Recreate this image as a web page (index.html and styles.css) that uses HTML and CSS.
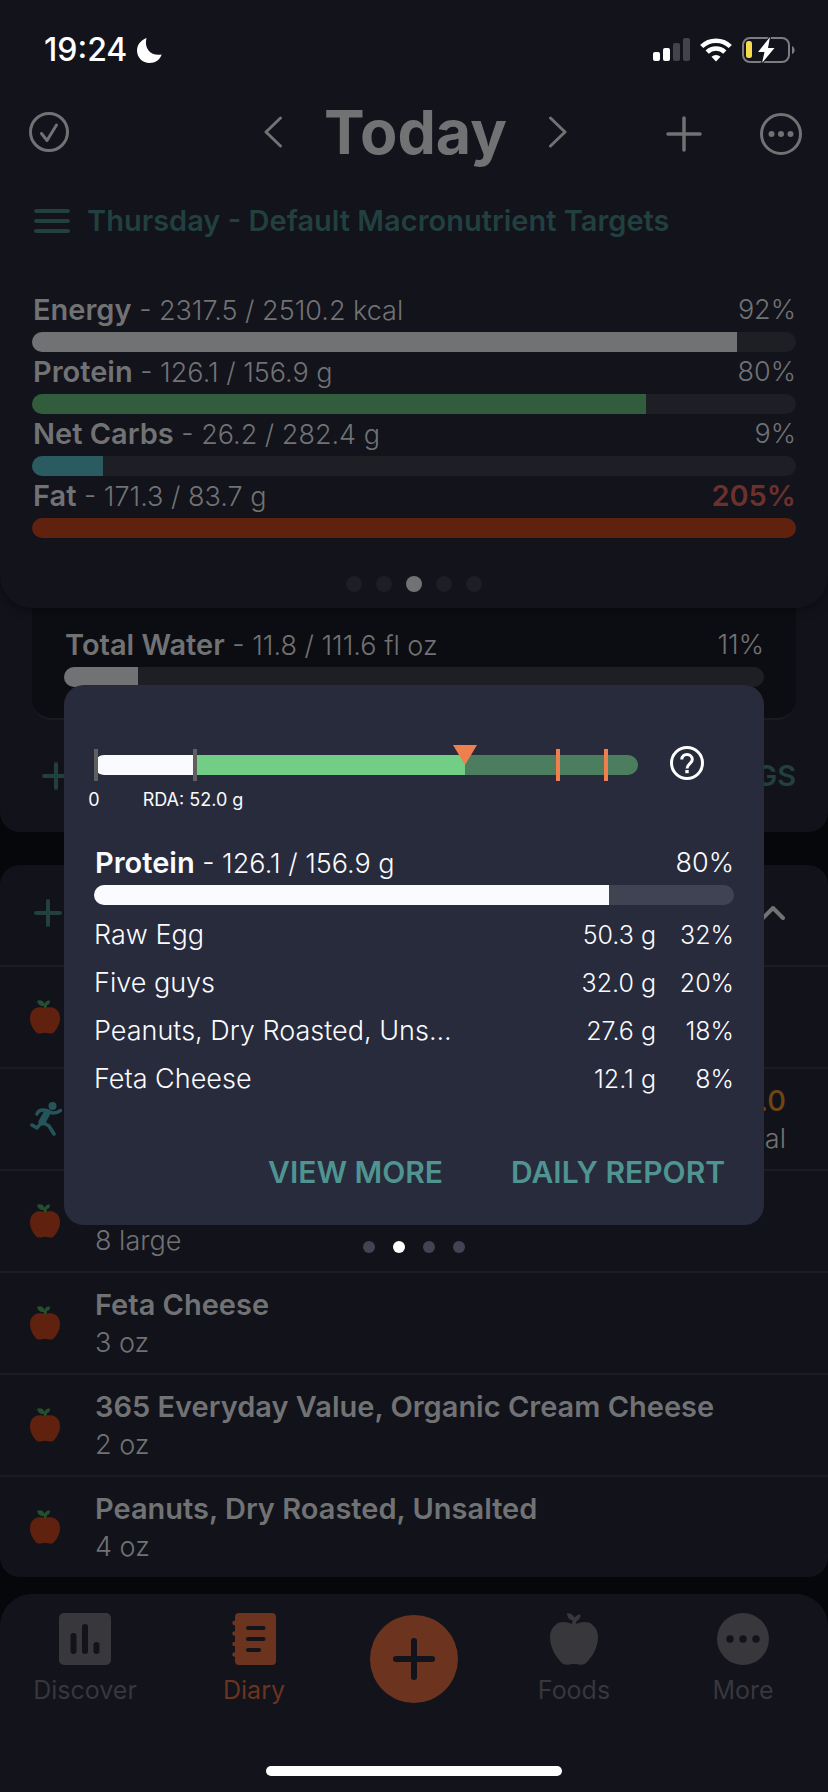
FILE: index.html
```html
<!DOCTYPE html>
<html lang="en">
<head>
<meta charset="utf-8">
<meta name="viewport" content="width=device-width, initial-scale=1">
<title>Diary</title>
<link rel="stylesheet" href="styles.css">
</head>
<body>
<svg class="defs" aria-hidden="true">
  <symbol id="apple" viewBox="0 0 30 34">
    <path class="apple-leaf" d="M7 1c3-2 7 0 7.500 3 .5-2 2.500-4 5.500-3.500 0 3-1 4-3 4.500l-.5 4h-3l.3-3C10.500 6.500 8 5 7 1z"/>
    <path class="apple-body" d="M15 8.500c3-1.500 7-2 10 0 3.500 2 5 5.500 5 10 0 6-4 12-7 14.500-2.500 1.500-5-.3-8-.3S9.500 34.500 7 33C4 30.500 0 24.500 0 18.500c0-4.500 1.500-8 5-10 3-2 7-1.500 10 0z"/>
  </symbol>
</svg>
<div class="screen">
  <header class="top">
    <div class="status">
      <div class="status-left">
        <span class="clock">19:24</span>
        <svg width="25" height="25" viewBox="0 0 25 25"><path fill="#fff" d="M9.500 0C5 1.500 0 6 0 12.500 0 19.500 5.500 25 12.500 25c6 0 10.500-3.500 12.200-8.500C15 18.500 6.500 11.500 9.500 0z"/></svg>
      </div>
      <div class="status-right">
        <svg width="37" height="24" viewBox="0 0 37 24"><g fill="#fff"><rect y="14" width="7" height="9" rx="2"/><rect x="10" y="10" width="7" height="13" rx="2"/></g><g fill="#434449"><rect x="20" y="5" width="7" height="18" rx="2"/><rect x="30" width="7" height="23" rx="2"/></g></svg>
        <svg width="32" height="24" viewBox="0 0 32 24"><g fill="none" stroke="#fff" stroke-width="4.500"><path d="M1.700 8.500a20.500 20.500 0 0 1 28.600 0"/><path d="M7.200 14.200a12.600 12.600 0 0 1 17.600 0"/></g><path fill="#fff" d="M11.500 18.800a6.400 6.400 0 0 1 9 0L16 23.500z"/></svg>
        <svg width="53" height="26" viewBox="0 0 53 26"><rect x="1" y="1" width="46" height="24" rx="7" fill="none" stroke="#7c7d81" stroke-width="2"/><path d="M50 9c3.500 1.500 3.500 7 0 8z" fill="#7c7d81"/><rect x="4" y="4" width="6" height="17" rx="2.500" fill="#f8d94b"/><path d="M28 0L16 15h6.500L20 26l12.500-15H26z" fill="#fff" stroke="#12131b" stroke-width="2" paint-order="stroke"/></svg>
      </div>
    </div>
    <div class="titlebar">
      <button class="icon-btn" aria-label="Mark day complete"><svg width="40" height="40" viewBox="0 0 40 40"><circle cx="20" cy="20" r="18.500"/><path d="M12.500 21.500l5.500 7L27.500 13" /></svg></button>
      <div class="day">
        <button class="icon-btn" aria-label="Previous day"><svg width="18" height="32" viewBox="0 0 18 32"><path d="M16.500 2L2 16l14.500 14"/></svg></button>
        <h1>Today</h1>
        <button class="icon-btn" aria-label="Next day"><svg width="18" height="32" viewBox="0 0 18 32"><path d="M1.500 2L16 16 1.500 30"/></svg></button>
      </div>
      <div class="actions">
        <button class="icon-btn" aria-label="Add"><svg width="36" height="36" viewBox="0 0 36 36"><path d="M18 2v32M2 18h32" stroke-width="3.500"/></svg></button>
        <button class="icon-btn" aria-label="Options"><svg width="42" height="42" viewBox="0 0 42 42"><circle cx="21" cy="21" r="19.500"/><g fill="#717274" stroke="none"><circle cx="11.500" cy="21" r="3"/><circle cx="21" cy="21" r="3"/><circle cx="30.500" cy="21" r="3"/></g></svg></button>
      </div>
    </div>
    <a class="targets" href="#targets">
      <svg width="36" height="26" viewBox="0 0 36 26"><path d="M2 3h32M2 13h32M2 23h32"/></svg>
      <span>Thursday - Default Macronutrient Targets</span>
    </a>
    <div class="metrics">
      <div class="metric"><div class="metric-text"><span><b>Energy</b> - 2317.5 / 2510.2 kcal</span><span>92%</span></div><div class="track"><div class="fill" style="width:92.3%"></div></div></div>
      <div class="metric"><div class="metric-text"><span><b>Protein</b> - 126.1 / 156.9 g</span><span>80%</span></div><div class="track"><div class="fill protein" style="width:80.4%"></div></div></div>
      <div class="metric"><div class="metric-text"><span><b>Net Carbs</b> - 26.2 / 282.4 g</span><span>9%</span></div><div class="track"><div class="fill carbs" style="width:9.3%"></div></div></div>
      <div class="metric"><div class="metric-text"><span><b>Fat</b> - 171.3 / 83.7 g</span><b class="over">205%</b></div><div class="track"><div class="fill fat" style="width:100%"></div></div></div>
    </div>
    <div class="dots"><i></i><i></i><i class="on"></i><i></i><i></i></div>
  </header>

  <main>
    <section class="panel water">
      <div class="water-card">
        <div class="metric"><div class="metric-text"><span><b>Total Water</b> - 11.8 / 111.6 fl oz</span><span>11%</span></div><div class="track"><div class="fill" style="width:10.6%"></div></div></div>
      </div>
      <div class="water-actions">
        <button class="add" aria-label="Add water"><svg width="28" height="28" viewBox="0 0 28 28"><path d="M14 2v24M2 14h24"/></svg></button>
        <button class="settings">SETTINGS</button>
      </div>
    </section>

    <section class="panel diary">
      <div class="diary-head">
        <button class="add" aria-label="Add food"><svg width="28" height="28" viewBox="0 0 28 28"><path d="M14 2v24M2 14h24"/></svg></button>
        <button class="icon-btn" aria-label="Collapse"><svg width="24" height="14" viewBox="0 0 24 14"><path d="M2 12L12 2l10 10" stroke-width="4"/></svg></button>
      </div>
      <ul>
        <li><svg class="food"><use href="#apple"/></svg></li>
        <li>
          <svg class="runner" viewBox="0 0 32 34"><circle cx="22.500" cy="4" r="4"/><g fill="none" stroke-width="3.500" stroke-linecap="round" stroke-linejoin="round"><path d="M7 12c1.500-4 5-4.500 9.500-3.500 5 1.500 6 5 14 0"/><path d="M17 11l-6 10 -4 5-5-3" /><path d="M12 20l7 4 5 8"/><path d="M17 11l-5 9" stroke-width="7"/></g></svg>
          <div class="amount"><b>0.0</b><span>kcal</span></div>
        </li>
        <li><svg class="food"><use href="#apple"/></svg><div class="item"><b>Raw Egg</b><span>8 large</span></div></li>
        <li><svg class="food"><use href="#apple"/></svg><div class="item"><b>Feta Cheese</b><span>3 oz</span></div></li>
        <li><svg class="food"><use href="#apple"/></svg><div class="item"><b>365 Everyday Value, Organic Cream Cheese</b><span>2 oz</span></div></li>
        <li><svg class="food"><use href="#apple"/></svg><div class="item"><b>Peanuts, Dry Roasted, Unsalted</b><span>4 oz</span></div></li>
      </ul>
    </section>
  </main>

  <nav class="tabs">
    <div class="tab-grid">
      <a href="#discover"><svg width="52" height="52" viewBox="0 0 52 52"><rect width="52" height="52" rx="5" fill="currentColor"/><path class="cut" d="M14.500 23v15M26 14v24M37.500 32v6" stroke-width="6"/></svg><span>Discover</span></a>
      <a href="#diary" class="active" aria-current="page"><svg width="44" height="52" viewBox="0 0 44 52"><rect x="3" width="41" height="52" rx="4" fill="currentColor"/><g fill="currentColor"><circle cx="2.500" cy="10" r="2.300"/><circle cx="2.500" cy="20.500" r="2.300"/><circle cx="2.500" cy="31" r="2.300"/><circle cx="2.500" cy="41.500" r="2.300"/></g><path class="cut" d="M16 15h15.500M16 26h15.500M16 37h11" stroke-width="4"/></svg><span>Diary</span></a>
      <button class="fab" aria-label="Add to diary"><svg width="44" height="44" viewBox="0 0 44 44"><path class="cut" d="M22 4v36M4 22h36" stroke-width="6"/></svg></button>
      <a href="#foods"><svg width="48" height="52" viewBox="0 0 48 52"><path fill="currentColor" d="M17 0c4 .5 6.500 2 7.500 5 1.500-2.500 3.500-4 6-3.500.3 3-1.500 5.500-4 6.500l-.3 3c5-2.500 12-3 16 .5C46 14.500 48 18.500 48 24c0 9-4.500 18-10 24-4.500 6-8 3-14 3s-9.500 3-14-3C4.500 42 0 33 0 24c0-5.500 2-9.500 6-12.500 4-3.500 11-3 16-.5l.5-3.500C19 6.500 17 4 17 0z"/></svg><span>Foods</span></a>
      <a href="#more"><svg width="52" height="52" viewBox="0 0 52 52"><circle cx="26" cy="26" r="26" fill="currentColor"/><g fill="#12131b"><circle cx="13" cy="26" r="3.700"/><circle cx="26" cy="26" r="3.700"/><circle cx="39" cy="26" r="3.700"/></g></svg><span>More</span></a>
    </div>
    <div class="home"></div>
  </nav>

  <div class="overlay">
    <section class="modal" role="dialog" aria-label="Protein">
      <div class="gauge-row">
        <div class="gauge">
          <div class="gauge-track"><div class="low"></div><div class="mid"></div></div>
          <i class="tick" style="left:0"></i><i class="tick" style="left:18.200%"></i>
          <i class="tick target" style="left:85%"></i><i class="tick target" style="left:93.750%"></i>
          <svg class="pointer" viewBox="0 0 24 20"><path d="M0 0h24L12 20z" fill="#ef7f4e"/></svg>
          <span class="mark" style="left:0">0</span><span class="mark" style="left:18.200%">RDA: 52.0 g</span>
        </div>
        <button class="help" aria-label="Help"><svg width="36" height="36" viewBox="0 0 36 36"><g fill="none" stroke="#fff" stroke-width="3"><circle cx="18" cy="18" r="15.500"/><path d="M12.800 14.500c0-7 10.500-6.500 10.500 0 0 4-5.300 4.200-5.300 9" /></g><rect x="16.300" y="25" width="3.400" height="3.200" fill="#fff"/></svg></button>
      </div>
      <div class="metric"><div class="metric-text"><span><b>Protein</b> - 126.1 / 156.9 g</span><span>80%</span></div><div class="track"><div class="fill" style="width:80.4%"></div></div></div>
      <table>
        <tr><th scope="row">Raw Egg</th><td>50.3 g</td><td>32%</td></tr>
        <tr><th scope="row">Five guys</th><td>32.0 g</td><td>20%</td></tr>
        <tr><th scope="row">Peanuts, Dry Roasted, Uns...</th><td>27.6 g</td><td>18%</td></tr>
        <tr><th scope="row">Feta Cheese</th><td>12.1 g</td><td>8%</td></tr>
      </table>
      <div class="modal-actions"><button>VIEW MORE</button><button>DAILY REPORT</button></div>
    </section>
    <div class="dots small"><i></i><i class="on"></i><i></i><i></i></div>
  </div>
</div>
</body>
</html>
```
FILE: styles.css
```css
* { box-sizing: border-box; }
body { margin: 0; background: #06070b; color: #717274; font: 300 27px/42px Inter, "Liberation Sans", sans-serif; }
button { border: 0; padding: 0; background: none; color: inherit; font: inherit; }
a { color: inherit; text-decoration: none; }
ul { margin: 0; padding: 0; list-style: none; }
svg { display: block; flex: none; }
b { font-weight: 600; font-size: 29px; }
.defs { position: absolute; width: 0; height: 0; }
.screen { position: relative; }

.top { position: relative; z-index: 1; padding-bottom: 16px; background: #12131b; border-radius: 0 0 32px 32px; box-shadow: 0 2px 12px rgba(0, 0, 0, .4); }
.status { display: flex; justify-content: space-between; align-items: center; height: 100px; padding: 0 33px 0 44px; color: #fff; }
.status-left, .status-right { display: flex; align-items: center; gap: 10px; }
.clock { font-size: 32px; font-weight: 500; }
.titlebar { display: grid; grid-template-columns: 1fr auto 1fr; align-items: center; height: 64px; padding: 0 26px 0 29px; }
.icon-btn svg { fill: none; stroke: #717274; stroke-width: 3; stroke-linecap: round; stroke-linejoin: round; }
.day { display: flex; align-items: center; gap: 42px; }
.day h1 { margin: 0; font-size: 61px; line-height: 64px; font-weight: 700; }
.actions { display: flex; justify-content: flex-end; align-items: center; gap: 58px; padding-top: 4px; }
.targets { display: flex; align-items: center; gap: 17px; height: 42px; margin-top: 36px; padding: 0 34px; color: #21403f; font-size: 29px; font-weight: 600; }
.targets svg { fill: none; stroke: currentColor; stroke-width: 4; stroke-linecap: round; }
.metrics { margin-top: 48px; padding: 0 32px; }
.metric-text { display: flex; justify-content: space-between; height: 42px; padding-left: 1px; line-height: 40px; }
.track { height: 20px; overflow: hidden; border-radius: 10px; background: #1e1f24; }
.fill { height: 100%; background: #717274; }
.fill.protein { background: #325d3c; }
.fill.carbs { background: #2a5b61; }
.fill.fat { background: #61210f; }
.over { color: #6c302d; }
.dots { display: flex; justify-content: center; gap: 14px; margin-top: 38px; }
.dots i { width: 16px; height: 16px; border-radius: 50%; background: #1e1f24; }
.dots .on { background: #717274; }

.panel { background: #12131a; border-radius: 20px; }
.water { margin-top: -48px; padding: 0 32px; }
.water-card { padding: 65px 32px 31px; background: #0c0d12; border-bottom: 2px solid #1a1b1f; border-radius: 20px; }
.water-actions { display: flex; justify-content: space-between; align-items: center; height: 112px; padding: 0 0 0 10px; color: #21403f; }
.settings { font-size: 29px; font-weight: 600; }
.add svg { fill: none; stroke: #21403f; stroke-width: 4; stroke-linecap: round; }
.diary { margin-top: 33px; }
.diary-head { display: flex; justify-content: space-between; align-items: center; height: 102px; padding: 0 43px 4px 34px; border-bottom: 2px solid #1b1c21; }
.diary li { display: flex; align-items: center; gap: 35px; height: 102px; padding: 0 42px 0 30px; border-bottom: 2px solid #1b1c21; line-height: 38px; }
.diary li:last-child { height: 100px; border: 0; }
.food { width: 30px; height: 34px; }
.apple-leaf { fill: #22502c; }
.apple-body { fill: #61210f; }
.runner { width: 32px; height: 34px; fill: #24555b; stroke: #24555b; stroke-width: 0; }
.item, .amount { display: flex; flex-direction: column; padding-top: 2px; }
.amount { margin-left: auto; text-align: right; }
.amount b { color: #704514; font-weight: 500; }

.tabs { margin-top: 17px; padding: 19px 0 16px; background: #12131b; border-radius: 32px 32px 0 0; }
.tab-grid { display: grid; grid-template-columns: 170fr 168fr 152fr 168fr 170fr; align-items: start; justify-items: center; color: #37373c; }
.tab-grid a { display: flex; flex-direction: column; align-items: center; gap: 10px; font-size: 25px; line-height: 30px; font-weight: 400; }
.tab-grid .active { color: #6c331f; }
.cut { fill: none; stroke: #12131b; stroke-linecap: round; }
.fab { display: grid; place-items: center; width: 88px; height: 88px; margin-top: 2px; border-radius: 50%; background: #6c331f; }
.home { width: 296px; height: 10px; margin: 61px auto 0; border-radius: 5px; background: #fff; }

.overlay { position: absolute; z-index: 2; top: 685px; left: 64px; right: 64px; }
.modal { padding: 60px 30px 29px; background: #282b3b; border-radius: 20px; color: #fafbff; }
.modal .fill { background: #fafbff; }
.modal .track { background: #424352; }
.gauge-row { display: flex; align-items: flex-start; gap: 31px; height: 70px; margin-bottom: 28px; padding-right: 29px; }
.gauge { position: relative; flex: 1; padding-top: 10px; }
.gauge-track { display: flex; height: 20px; overflow: hidden; border-radius: 10px; background: #4b7d5e; }
.low { width: 18.2%; background: #fafbff; }
.mid { width: 50%; background: #72ce85; }
.tick { position: absolute; top: 4px; width: 4px; height: 32px; background: #5f5f5f; }
.tick.target { background: #ef7f4e; }
.pointer { position: absolute; top: 0; left: 66%; width: 24px; height: 20px; }
.mark { position: absolute; top: 40px; transform: translateX(-50%); font-size: 18px; line-height: 30px; font-weight: 400; white-space: nowrap; }
.modal table { width: 100%; margin-top: 6px; border-collapse: collapse; }
.modal th, .modal td { height: 48px; padding: 0; font-weight: 300; line-height: 42px; text-align: left; }
.modal td { width: 78px; font-size: 25px; text-align: right; white-space: nowrap; }
.modal td:nth-child(2) { width: 120px; }
.modal-actions { display: flex; justify-content: flex-end; gap: 68px; margin-top: 45px; padding-right: 9px; color: #4f9491; }
.modal-actions button { height: 48px; font-size: 30px; font-weight: 600; }
.dots.small { gap: 18px; margin-top: 16px; }
.small i { width: 12px; height: 12px; background: #424352; }
.small .on { background: #fff; }
```
